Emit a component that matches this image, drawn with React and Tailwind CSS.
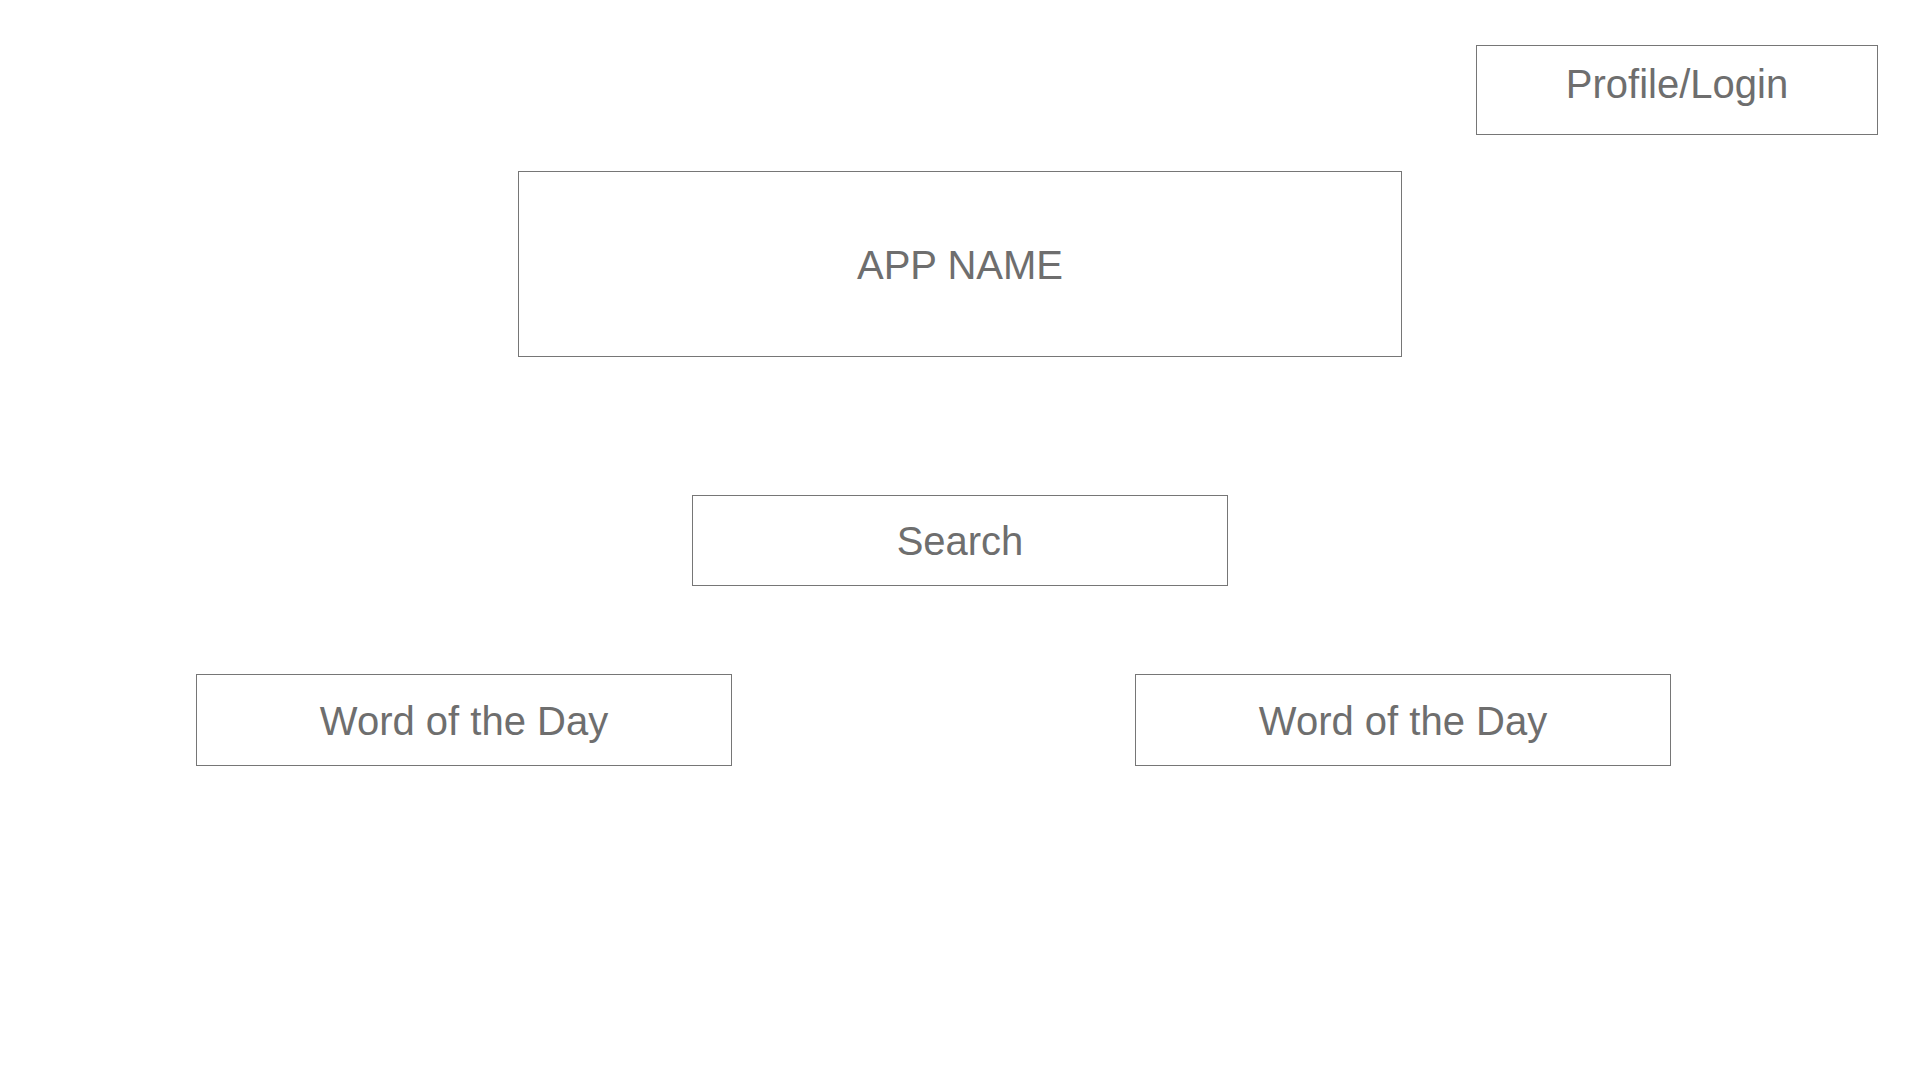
export default function App() {
  const box =
    "flex items-center justify-center border border-[#767676] text-[#6e6e6e] text-[40px] leading-none";

  return (
    <div className="w-[1920px] h-[1080px] bg-white font-['Liberation_Sans',Arial,sans-serif] flex flex-col">
      {/* Top bar */}
      <div className="flex justify-end pt-[45px] pr-[42px]">
        <div className={`${box} w-[402px] h-[90px] pb-[13px]`}>Profile/Login</div>
      </div>

      {/* App name */}
      <div className="flex justify-center mt-[36px]">
        <div className={`${box} w-[884px] h-[186px] pt-[2px]`}>APP NAME</div>
      </div>

      {/* Search */}
      <div className="flex justify-center mt-[138px]">
        <div className={`${box} w-[536px] h-[91px]`}>Search</div>
      </div>

      {/* Words of the day */}
      <div className="flex pl-[196px] gap-[403px] mt-[88px]">
        <div className={`${box} w-[536px] h-[92px] pt-[2px]`}>Word of the Day</div>
        <div className={`${box} w-[536px] h-[92px] pt-[2px]`}>Word of the Day</div>
      </div>
    </div>
  );
}
